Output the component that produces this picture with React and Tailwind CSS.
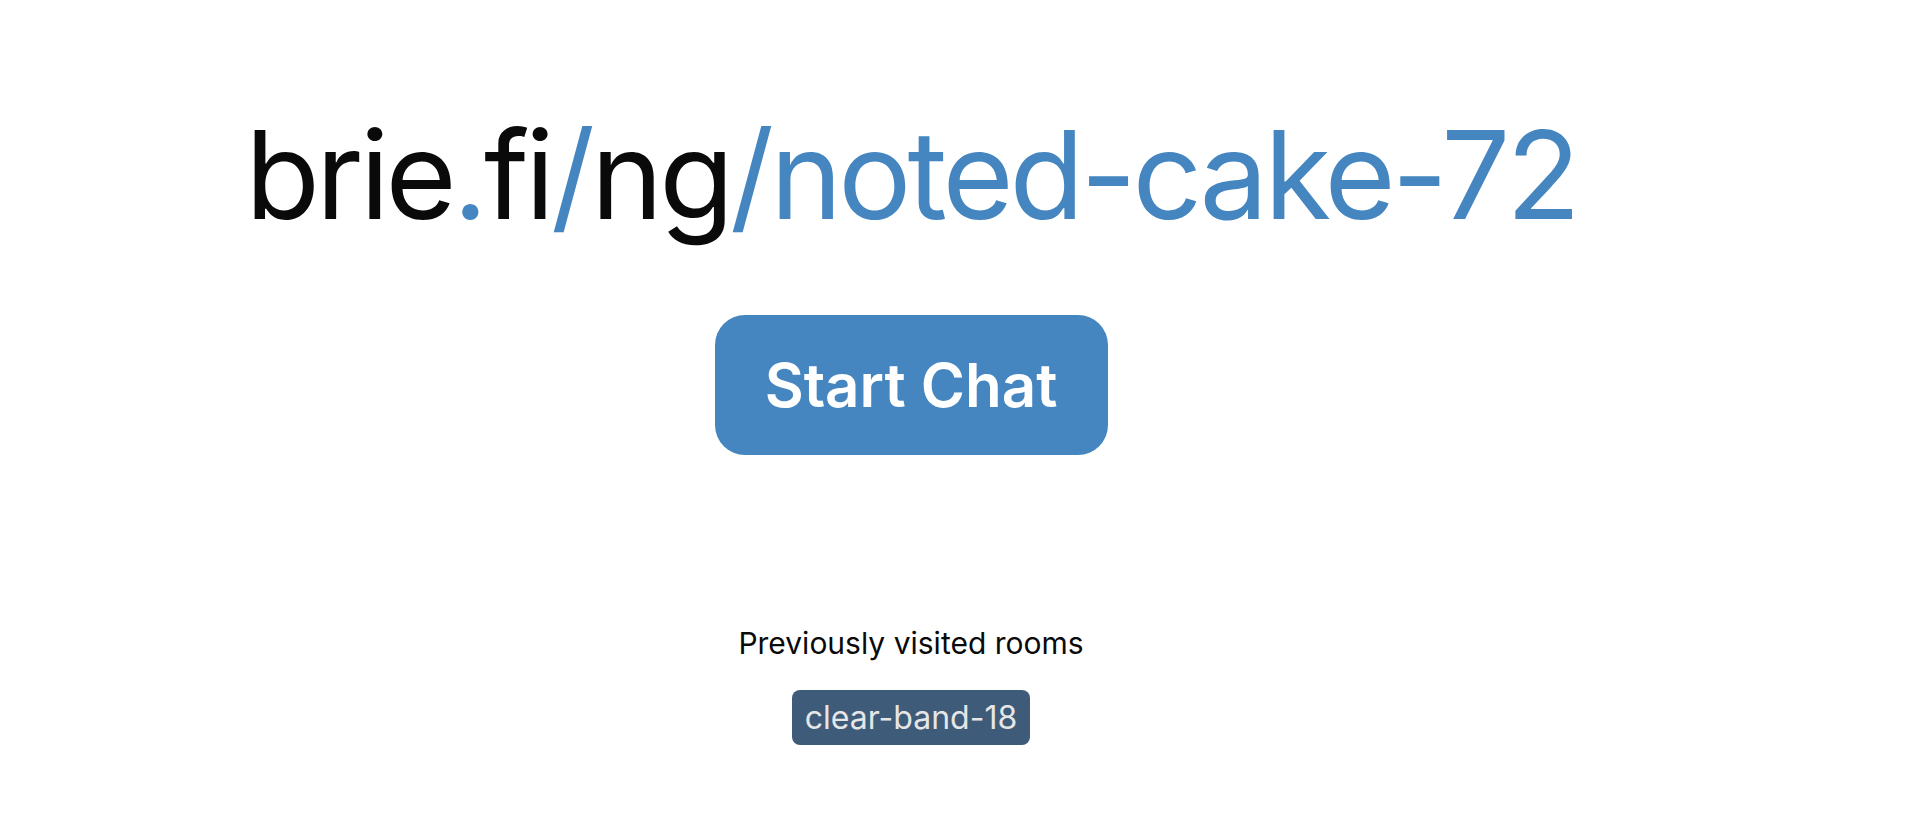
const App = () => {
  return (
    <div className="min-h-screen bg-white font-['Inter',sans-serif]">
      <div className="w-[1822px] flex flex-col items-center pt-[100px]">
        <h1 className="text-[122px] leading-[150px] text-[#0a0a0a] tracking-[-0.032em]">
          brie<span className="text-[#4586c0]">.</span>fi
          <span className="text-[#4586c0]">/</span>ng
          <span className="text-[#4586c0]">/noted-cake-72</span>
        </h1>
        <button className="mt-[65px] w-[393px] h-[140px] rounded-[30px] bg-[#4586c0] text-white text-[60px] font-semibold">
          Start Chat
        </button>
        <p className="mt-[166px] text-[30px] text-[#0a0a0a]">
          Previously visited rooms
        </p>
        <a className="mt-[24px] px-[13px] h-[55px] flex items-center rounded-[8px] bg-[#3e5b7a] text-[#e6e6e6] text-[32px]">
          clear-band-18
        </a>
      </div>
    </div>
  );
};

export default App;
